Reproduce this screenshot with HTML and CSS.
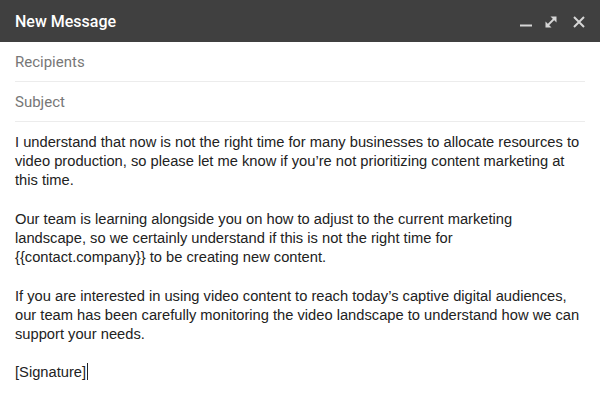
FILE: index.html
```html
<!DOCTYPE html>
<html lang="en">
<head>
    <meta charset="UTF-8">
    <meta name="viewport" content="width=device-width, initial-scale=1.0">
    <title>New Message</title>
    <link rel="stylesheet" href="styles.css">
</head>
<body>
    <div class="compose">
        <div class="compose-header">
            <span class="compose-title">New Message</span>
            <div class="compose-actions">
                <svg class="icon icon-min" width="12" height="12" viewBox="0 0 12 12">
                    <rect x="0" y="8.5" width="12" height="2" fill="currentColor"/>
                </svg>
                <svg class="icon icon-expand" width="12" height="12" viewBox="0 0 12 12">
                    <path d="M2 10 L10 2" stroke="currentColor" stroke-width="1.8"/>
                    <path d="M5.5 0.5 H11.5 V6.5 Z" fill="currentColor"/>
                    <path d="M0.5 5.5 V11.5 H6.5 Z" fill="currentColor"/>
                </svg>
                <svg class="icon icon-close" width="12" height="12" viewBox="0 0 12 12">
                    <path d="M1 1 L11 11 M11 1 L1 11" stroke="currentColor" stroke-width="2"/>
                </svg>
            </div>
        </div>

        <div class="field">Recipients</div>
        <div class="field">Subject</div>

        <div class="compose-body">
            <p>I understand that now is not the right time for many businesses to allocate resources to video production, so please let me know if you’re not prioritizing content marketing at this time.</p>
            <p>Our team is learning alongside you on how to adjust to the current marketing landscape, so we certainly understand if this is not the right time for {{contact.company}} to be creating new content.</p>
            <p>If you are interested in using video content to reach today’s captive digital audiences, our team has been carefully monitoring the video landscape to understand how we can support your needs.</p>
            <p>[Signature]<span class="caret"></span></p>
        </div>
    </div>
</body>
</html>
```

FILE: styles.css
```css
body {
    margin: 0;
    padding: 0;
    background: #fff;
    font-family: Roboto, "Liberation Sans", Arial, sans-serif;
}
.compose {
    width: 600px;
    height: 409px;
    overflow: hidden;
}
.compose-header {
    height: 42px;
    background: #404040;
    display: flex;
    align-items: center;
    justify-content: space-between;
    padding: 0 15px 0 15px;
}
.compose-title {
    color: #fff;
    font-size: 16px;
    font-weight: 500;
    padding-top: 1px;
}
.compose-actions {
    display: flex;
    align-items: center;
    color: #d6d6d6;
    padding-top: 1px;
}
.icon {
    display: block;
}
.icon-expand {
    margin-left: 13px;
}
.icon-close {
    margin-left: 16px;
}
.field {
    margin: 0 15px;
    height: 39px;
    line-height: 41px;
    border-bottom: 1px solid #ececec;
    color: #777;
    font-size: 15px;
}
.compose-body {
    padding: 11px 15px 0;
    font-family: "Liberation Sans", Arial, sans-serif;
    font-size: 14.7px;
    line-height: 19.2px;
    color: #222;
}
.compose-body p {
    margin: 0 0 19.2px;
}
.caret {
    display: inline-block;
    width: 1px;
    height: 17px;
    background: #222;
    vertical-align: -3px;
    margin-left: 1px;
}
```
